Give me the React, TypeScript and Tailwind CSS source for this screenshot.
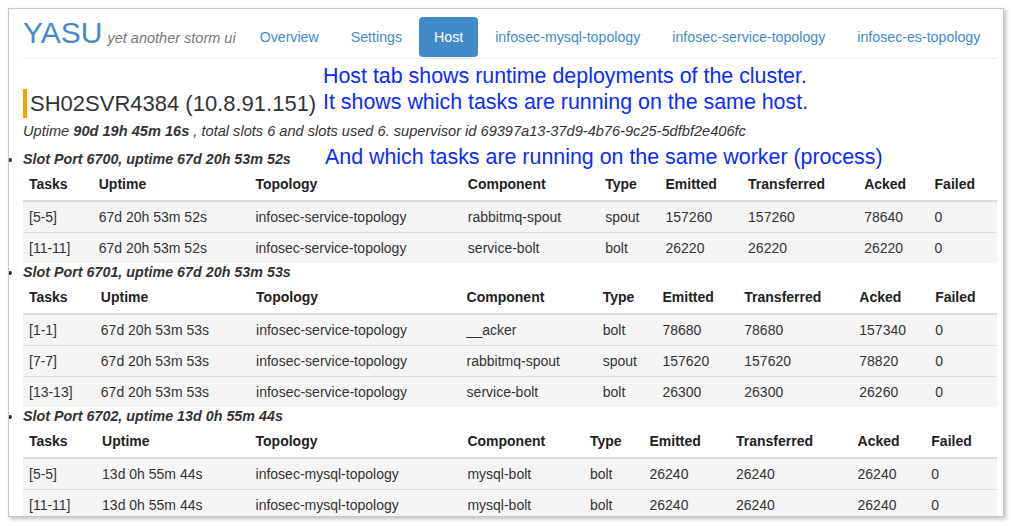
import React from 'react'

type Row = {
  tasks: string
  uptime: string
  topology: string
  component: string
  type: string
  emitted: string
  transferred: string
  acked: string
  failed: string
}

type Slot = { port: string; uptime: string; rows: Row[] }

const slots: Slot[] = [
  {
    port: '6700',
    uptime: '67d 20h 53m 52s',
    rows: [
      { tasks: '[5-5]', uptime: '67d 20h 53m 52s', topology: 'infosec-service-topology', component: 'rabbitmq-spout', type: 'spout', emitted: '157260', transferred: '157260', acked: '78640', failed: '0' },
      { tasks: '[11-11]', uptime: '67d 20h 53m 52s', topology: 'infosec-service-topology', component: 'service-bolt', type: 'bolt', emitted: '26220', transferred: '26220', acked: '26220', failed: '0' },
    ],
  },
  {
    port: '6701',
    uptime: '67d 20h 53m 53s',
    rows: [
      { tasks: '[1-1]', uptime: '67d 20h 53m 53s', topology: 'infosec-service-topology', component: '__acker', type: 'bolt', emitted: '78680', transferred: '78680', acked: '157340', failed: '0' },
      { tasks: '[7-7]', uptime: '67d 20h 53m 53s', topology: 'infosec-service-topology', component: 'rabbitmq-spout', type: 'spout', emitted: '157620', transferred: '157620', acked: '78820', failed: '0' },
      { tasks: '[13-13]', uptime: '67d 20h 53m 53s', topology: 'infosec-service-topology', component: 'service-bolt', type: 'bolt', emitted: '26300', transferred: '26300', acked: '26260', failed: '0' },
    ],
  },
  {
    port: '6702',
    uptime: '13d 0h 55m 44s',
    rows: [
      { tasks: '[5-5]', uptime: '13d 0h 55m 44s', topology: 'infosec-mysql-topology', component: 'mysql-bolt', type: 'bolt', emitted: '26240', transferred: '26240', acked: '26240', failed: '0' },
      { tasks: '[11-11]', uptime: '13d 0h 55m 44s', topology: 'infosec-mysql-topology', component: 'mysql-bolt', type: 'bolt', emitted: '26240', transferred: '26240', acked: '26240', failed: '0' },
    ],
  },
]

const headers = ['Tasks', 'Uptime', 'Topology', 'Component', 'Type', 'Emitted', 'Transferred', 'Acked', 'Failed']
const navItems = ['Overview', 'Settings', 'Host', 'infosec-mysql-topology', 'infosec-service-topology', 'infosec-es-topology']

const SlotTable = ({ slot }: { slot: Slot }) => {
  return (
    <li className="leading-[18px]">
      <span className="text-[14.3px] font-bold italic">{`Slot Port ${slot.port}, uptime ${slot.uptime}`}</span>
      <table className="w-full table-auto border-collapse not-italic">
        <thead>
          <tr>
            {headers.map((h) => (
              <th key={h} className="px-[6px] pt-[6px] pb-[6px] text-left font-bold leading-5 text-[#222] border-b-2 border-[#ddd]">
                {h}
              </th>
            ))}
          </tr>
        </thead>
        <tbody>
          {slot.rows.map((r, i) => (
            <tr key={i} className="bg-[#f5f5f5]">
              {[r.tasks, r.uptime, r.topology, r.component, r.type, r.emitted, r.transferred, r.acked, r.failed].map((v, j) => (
                <td key={j} className="px-[6px] py-[5px] leading-5 border-t border-[#ddd]">
                  {v}
                </td>
              ))}
            </tr>
          ))}
        </tbody>
      </table>
    </li>
  )
}

export default function App() {
  return (
    <div className="w-[1013px] h-[526px] bg-white pt-2 pl-2 pr-[9px] pb-[9px] font-['Liberation_Sans',Arial,sans-serif] text-[14px] text-[#333]">
      <div className="relative h-full overflow-hidden border border-[#c8c8c8] bg-white pl-[14px] pr-[6px] shadow-[2px_2px_4px_rgba(0,0,0,0.25)]">
        {/* header */}
        <div className="flex items-end whitespace-nowrap border-b border-[#eee] pt-[7px] pb-[1px]">
          <div className="flex shrink-0 items-baseline pb-[7px]">
            <span className="text-[30px] leading-[34px] text-[#428bca]">YASU</span>
            <span className="ml-[5px] text-[14.5px] italic text-[#777]">yet another storm ui</span>
          </div>
          <ul className="ml-[9px] flex shrink-0 gap-[2px] text-[14.2px]">
            {navItems.map((n) => (
              <li key={n}>
                <a
                  className={
                    n === 'Host'
                      ? 'block rounded px-[15px] py-[10px] leading-5 text-white bg-[#428bca]'
                      : 'block rounded px-[15px] py-[10px] leading-5 text-[#428bca]'
                  }
                >
                  {n}
                </a>
              </li>
            ))}
          </ul>
        </div>

        {/* host heading */}
        <h3 className="mt-[30px] border-l-4 border-[#ff9f00] pl-[3px] text-[22px] leading-[29px] text-[#333]">
          SH02SVR4384 (10.8.91.151)
        </h3>
        <p className="mt-[3px] whitespace-nowrap text-[14.6px] italic leading-5">
          Uptime <b>90d 19h 45m 16s</b> , total slots 6 and slots used 6. supervisor id 69397a13-37d9-4b76-9c25-5dfbf2e406fc
        </p>

        <ul className="mt-[9px] list-disc list-outside">
          {slots.map((s) => (
            <SlotTable key={s.port} slot={s} />
          ))}
        </ul>

        {/* annotations */}
        <div className="absolute left-[314px] top-[54px] whitespace-nowrap text-[21.4px] leading-[26px] text-[#0a2cff]">
          <div>Host tab shows runtime deployments of the cluster.</div>
          <div>It shows which tasks are running on the same host.</div>
        </div>
        <div className="absolute left-[316px] top-[135px] whitespace-nowrap text-[21.4px] leading-[26px] text-[#0a2cff]">
          And which tasks are running on the same worker (process)
        </div>
      </div>
    </div>
  )
}
